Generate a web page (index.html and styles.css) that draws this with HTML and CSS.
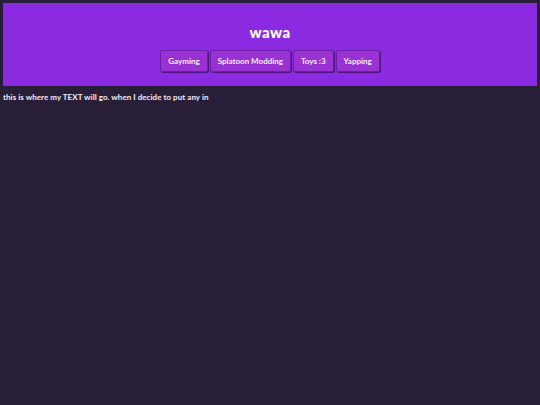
FILE: index.html
```html
<!DOCTYPE html>
<html>
<head>
<meta charset="utf-8">
<link rel="stylesheet" href="styles.css">
</head>
<body>
<header class="site-header">
  <h1 class="title">wawa</h1>
  <nav class="nav">
    <a class="nav-btn" href="#">Gayming</a>
    <a class="nav-btn" href="#">Splatoon Modding</a>
    <a class="nav-btn" href="#">Toys :3</a>
    <a class="nav-btn" href="#">Yapping</a>
  </nav>
</header>
<p class="content">this is where my TEXT will go. when I decide to put any in</p>
</body>
</html>
```
FILE: styles.css
```css
html, body {
  background: #291e38;
}
body {
  margin: 3px;
  font-family: Lato, "Open Sans", sans-serif;
  font-weight: 700;
  color: #f2eef6;
}
.site-header {
  background: #8a2be2;
  padding: 20px 0 14px;
  display: flex;
  flex-direction: column;
  align-items: center;
}
.title {
  margin: 0 0 9px;
  font-size: 15px;
  line-height: 18px;
  font-weight: 900;
  color: #ffffff;
  letter-spacing: 0.4px;
}
.nav {
  display: flex;
  gap: 2px;
}
.nav-btn {
  display: block;
  height: 22px;
  box-sizing: border-box;
  padding: 0 7px;
  line-height: 20px;
  font-size: 8px;
  color: #f4ecfa;
  text-decoration: none;
  background: #9a31d2;
  border: 1px solid #6a1fa6;
  border-radius: 2px;
  box-shadow: 1px 1px 0 #4e1580;
}
.content {
  margin: 6px 0 0;
  font-size: 8px;
  line-height: 10px;
  letter-spacing: 0.05px;
}
```
